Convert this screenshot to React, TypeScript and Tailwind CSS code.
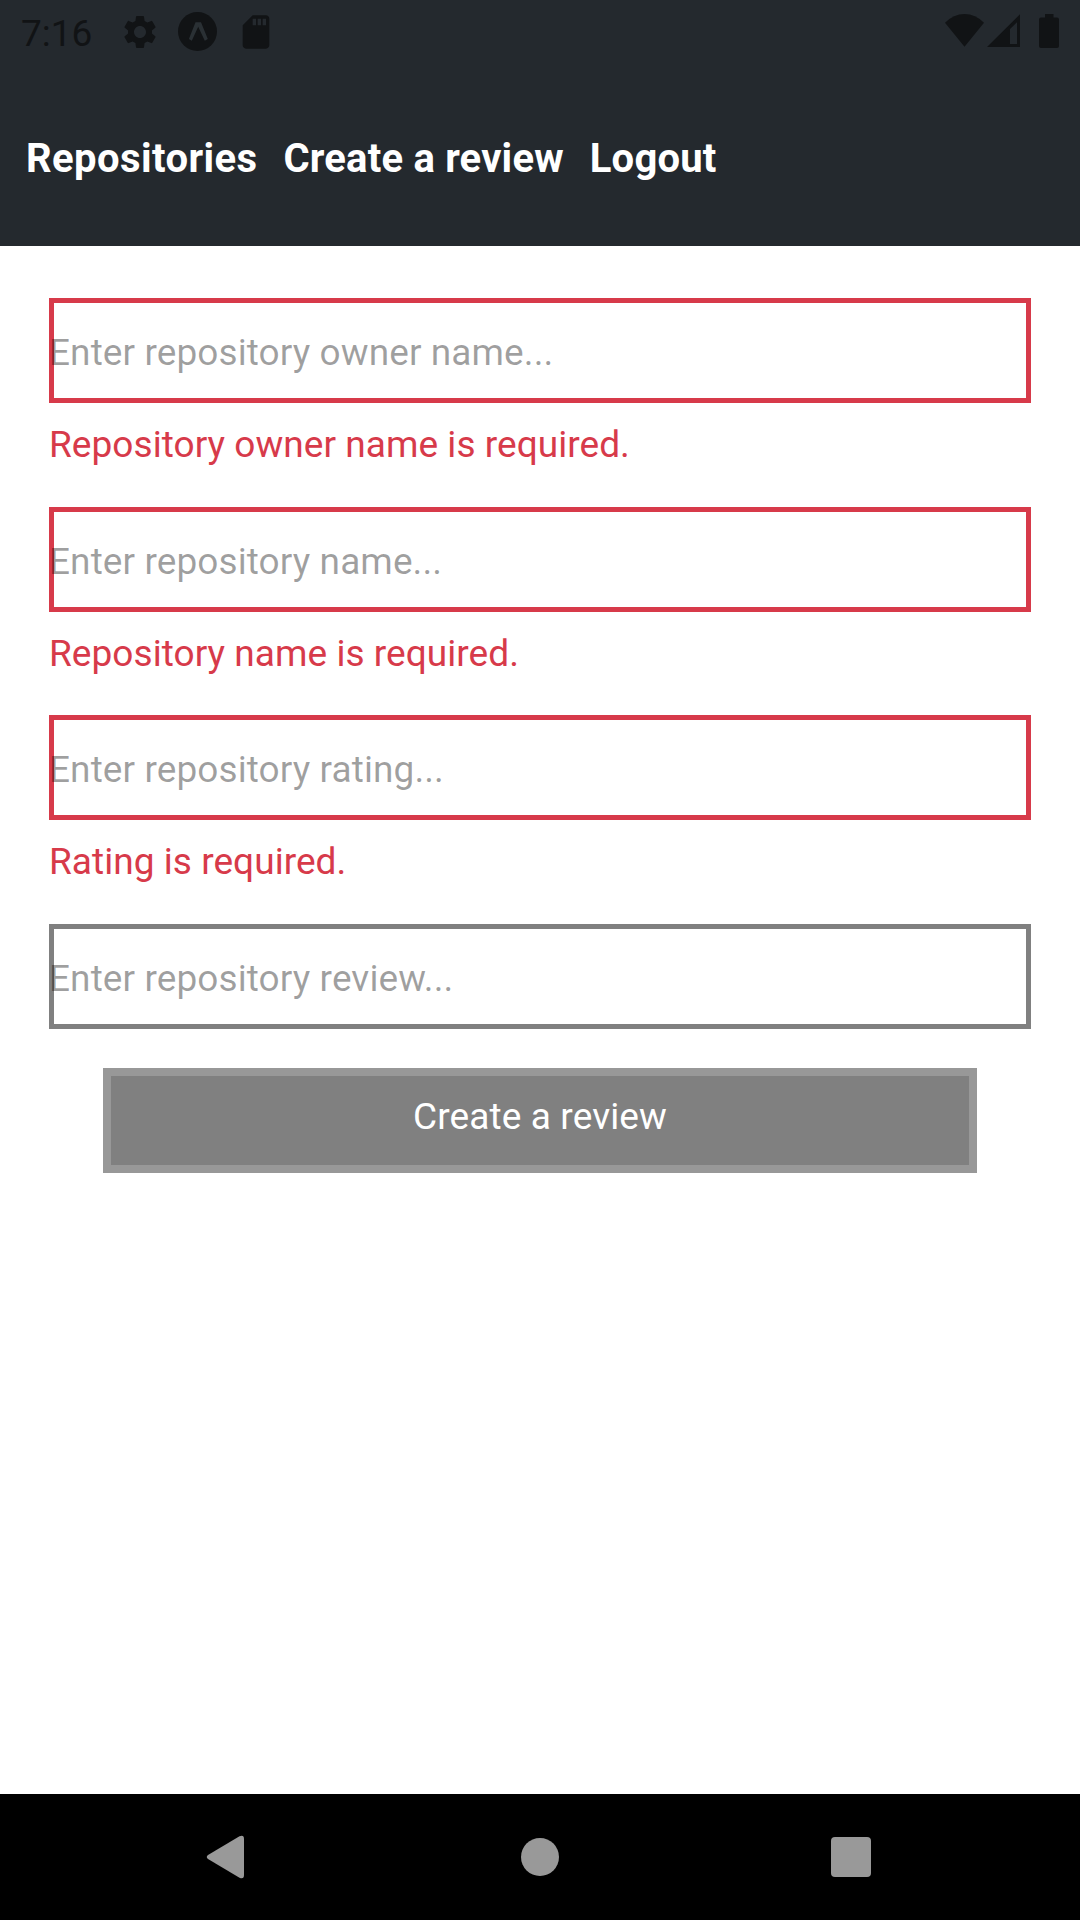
import { MdSettings, MdSdCard } from "react-icons/md";

function StatusBar() {
  return (
    <div className="flex h-[63px] w-full items-start justify-between pl-[21px] pr-[21px] text-[#111315]">
      <div className="flex items-start">
        <span className="mt-[12px] w-[99px] text-[37px] leading-[43px]">7:16</span>
        <MdSettings className="mt-[12px] size-[40px]" />
        <svg className="ml-[18px] mt-[12px] size-[39px]" viewBox="0 0 39 39">
          <circle cx="19.5" cy="19.5" r="19.5" fill="currentColor" />
          <path
            d="M17.5 10.3 H23 L29.8 27 L26.8 28.7 L20.2 14.8 L13.8 28.7 L10.9 27 Z"
            fill="#2a3034"
          />
        </svg>
        <MdSdCard className="ml-[19px] mt-[12px] size-[40px]" />
      </div>
      <svg className="mt-[13px] h-[36px] w-[115px]" viewBox="944 13 115 36" fill="currentColor">
        <path d="M964.5 46.7 L945 22.8 Q953.5 14 964.5 14 Q975.5 14 984 22.8 Z" />
        <path fillRule="evenodd" d="M987 47 L1020 14.3 V47 Z M1010 29 V44 H1017 V22.2 Z" />
        <path d="M1045 14 H1053.5 V17.5 H1057 Q1059 17.5 1059 19.5 V46 Q1059 48 1057 48 H1041 Q1039 48 1039 46 V19.5 Q1039 17.5 1041 17.5 H1045 Z" />
      </svg>
    </div>
  );
}

function Field({ placeholder, error }: { placeholder: string; error?: string }) {
  return (
    <div className={error ? "h-[208.7px]" : "h-[144px]"}>
      <input
        placeholder={placeholder}
        className={
          "block h-[105px] w-full bg-transparent p-0 pt-1 text-[37px] tracking-[0.09px] outline-none placeholder:text-black/38 placeholder:opacity-100 " +
          (error
            ? "shadow-[inset_0_0_0_5px_#d73a4a]"
            : "shadow-[inset_0_0_0_5px_#808080]")
        }
      />
      {error && (
        <p className="pt-5 text-[37px] leading-[43px] tracking-[0.05px] text-[#d73a4a]">{error}</p>
      )}
    </div>
  );
}

export default function App() {
  return (
    <div className="flex h-[1920px] w-[1080px] flex-col overflow-hidden bg-white font-[Roboto,sans-serif]">
      <header className="h-[246px] bg-[#24292e]">
        <StatusBar />
        <nav className="flex gap-[26px] pl-[26px] pt-[72px] text-[40px] leading-[48px] font-bold tracking-[0.2px] text-white">
          <span className="tracking-[0.42px]">Repositories</span>
          <span>Create a review</span>
          <span>Logout</span>
        </nav>
      </header>
      <main className="flex-1 px-[49px] pt-[52px]">
        <Field placeholder="Enter repository owner name..." error="Repository owner name is required." />
        <Field placeholder="Enter repository name..." error="Repository name is required." />
        <Field placeholder="Enter repository rating..." error="Rating is required." />
        <Field placeholder="Enter repository review..." />
        <button className="mx-auto flex h-[105px] w-[874px] justify-center border-8 border-[#989898] bg-[#808080] pt-[19px] text-[37px] leading-[43px] tracking-[0.13px] text-white">
          Create a review
        </button>
      </main>
      <footer className="h-[126px] bg-black">
        <svg className="block h-[126px] w-[1080px]" viewBox="0 0 1080 126" fill="#999999">
          <path d="M208 61 L239.5 42.3 Q244 40.5 244 45 V81 Q244 85.5 239.5 83.7 L208 65 Q205.500 63 208 61 Z" />
          <circle cx="540" cy="63" r="19" />
          <rect x="831" y="43" width="40" height="40" rx="4" />
        </svg>
      </footer>
    </div>
  );
}
